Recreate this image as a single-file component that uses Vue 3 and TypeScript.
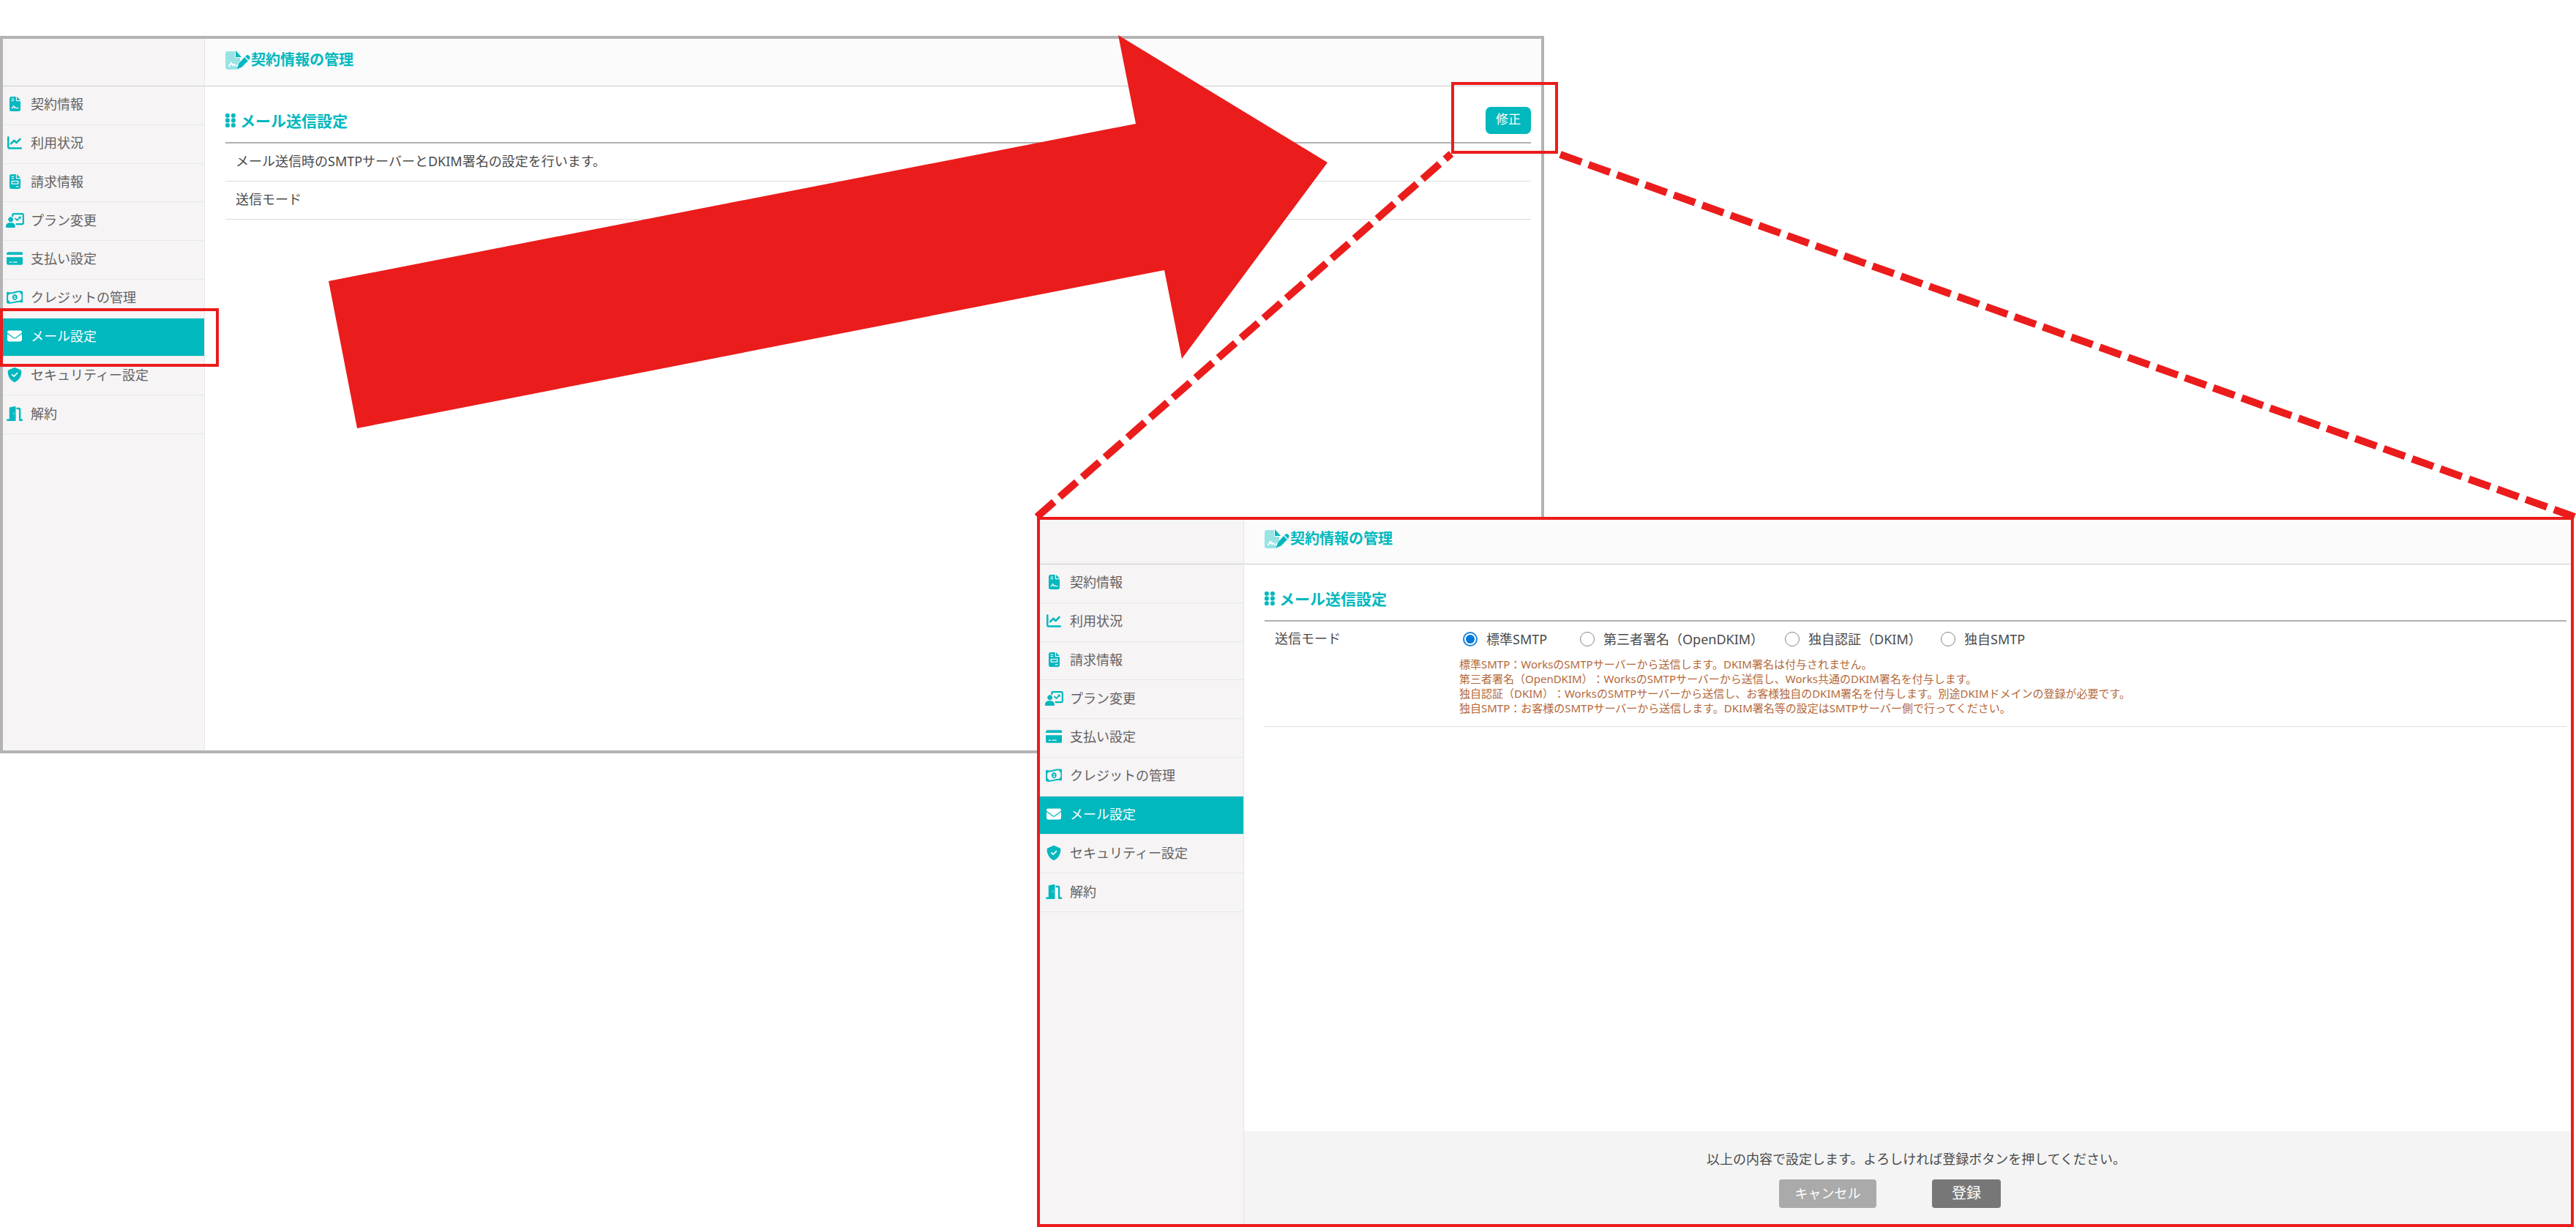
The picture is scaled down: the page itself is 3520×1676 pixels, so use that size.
<script setup lang="ts">
import { ref } from 'vue'

interface Shape {
  d: string
  paint?: 'line' | 'cut'
  width?: number
}
interface NavItem {
  label: string
  box: string
  shapes: Shape[]
}
interface Panel {
  id: 'view' | 'edit'
}

const sheet =
  'M64 0C28.7 0 0 28.7 0 64V448c0 35.3 28.7 64 64 64H320c35.3 0 64-28.7 64-64V160H256c-17.7 0-32-14.3-32-32V0H64zM256 0V128H384L256 0zM80 64h64c8.8 0 16 7.2 16 16s-7.2 16-16 16H80c-8.8 0-16-7.2-16-16s7.2-16 16-16zm0 64h64c8.8 0 16 7.2 16 16s-7.2 16-16 16H80c-8.8 0-16-7.2-16-16s7.2-16 16-16z'

const navItems: NavItem[] = [
  {
    label: '契約情報',
    box: '0 0 384 512',
    shapes: [{ d: sheet }, { d: 'M76 400H100L144 320L178 400L208 368L240 400H308', paint: 'cut', width: 34 }],
  },
  {
    label: '利用状況',
    box: '0 0 512 512',
    shapes: [
      { d: 'M64 64c0-17.7-14.3-32-32-32S0 46.3 0 64V400c0 44.2 35.8 80 80 80H480c17.7 0 32-14.3 32-32s-14.3-32-32-32H80c-8.8 0-16-7.2-16-16V64zm406.6 86.6c12.5-12.5 12.5-32.8 0-45.3s-32.8-12.5-45.3 0L320 210.7l-57.4-57.4c-12.5-12.5-32.8-12.5-45.3 0l-112 112c-12.5 12.5-12.5 32.8 0 45.3s32.8 12.5 45.3 0L240 221.3l57.4 57.4c12.5 12.5 32.8 12.5 45.3 0l128-128z' },
    ],
  },
  {
    label: '請求情報',
    box: '0 0 384 512',
    shapes: [
      { d: sheet },
      { d: 'M84 240H300V336H84Z', paint: 'cut', width: 34 },
      { d: 'M236 432H308', paint: 'cut', width: 34 },
    ],
  },
  {
    label: 'プラン変更',
    box: '0 0 640 512',
    shapes: [
      { d: 'M236 110V70Q236 30 276 30H570Q610 30 610 70V345Q610 385 570 385H370', paint: 'line', width: 56 },
      { d: 'M330 190L395 255L480 170', paint: 'line', width: 46 },
      { d: 'M430 120H530V220Z' },
      { d: 'M170 136a88 88 0 1 0 .1 0ZM130 336H200C270 336 328 394 328 466V480Q328 512 298 512H30Q0 512 0 480V466C0 394 58 336 130 336Z' },
    ],
  },
  {
    label: '支払い設定',
    box: '0 0 576 512',
    shapes: [
      { d: 'M64 32H512Q576 36 576 96V128H0V96Q0 36 64 32ZM0 208H576V416Q576 480 512 480H64Q0 480 0 416Z' },
      { d: 'M108 386H176M236 386H366', paint: 'cut', width: 30 },
    ],
  },
  {
    label: 'クレジットの管理',
    box: '0 0 576 512',
    shapes: [
      { d: 'M28 96C190 170 340 10 548 70V416C380 350 230 500 28 440Z', paint: 'line', width: 52 },
      { d: 'M28 96H112Q100 190 28 190ZM548 60V160Q470 150 460 62ZM28 350Q110 360 116 450H28ZM548 416H464Q476 320 548 320Z' },
      { d: 'M288 152a88 104 0 1 0 .1 0Z' },
      { d: 'M268 216H292V296M262 300H318', paint: 'cut', width: 28 },
    ],
  },
  {
    label: 'メール設定',
    box: '0 0 512 512',
    shapes: [
      { d: 'M48 64C21.5 64 0 85.5 0 112c0 15.1 7.1 29.3 19.2 38.4L236.8 313.6c11.4 8.5 27 8.5 38.4 0L492.8 150.4c12.1-9.1 19.2-23.3 19.2-38.4c0-26.5-21.5-48-48-48H48zM0 176V384c0 35.3 28.7 64 64 64H448c35.3 0 64-28.7 64-64V176L294.4 339.2c-22.8 17.1-54 17.1-76.8 0L0 176z' },
    ],
  },
  {
    label: 'セキュリティー設定',
    box: '0 0 512 512',
    shapes: [
      { d: 'M256 0c4.6 0 9.2 1 13.4 2.9L457.7 82.8c22 9.3 38.4 31 38.3 57.2c-.5 99.2-41.3 280.7-213.6 363.2c-16.7 8-36.1 8-52.8 0C57.3 420.7 16.5 239.2 16 140c-.1-26.2 16.3-47.9 38.3-57.2L242.7 2.9C246.8 1 251.4 0 256 0z' },
      { d: 'M172 252L232 312L344 196', paint: 'cut', width: 46 },
    ],
  },
  {
    label: '解約',
    box: '0 0 576 512',
    shapes: [
      { d: 'M96 64Q96 40 120 34L288 1Q320 -4 320 28V512H32Q0 512 0 480Q0 448 32 448H96Z' },
      { d: 'M370 76H430Q464 76 464 110V480H544', paint: 'line', width: 60 },
      { d: 'M256 222a34 34 0 1 0 .1 0Z', paint: 'cut', width: 8 },
    ],
  },
]

const activeItem = 'メール設定'
const panels: Panel[] = [{ id: 'view' }, { id: 'edit' }]

const modes = ['標準SMTP', '第三者署名（OpenDKIM）', '独自認証（DKIM）', '独自SMTP']
const selectedMode = ref(modes[0])

const notes = [
  '標準SMTP：WorksのSMTPサーバーから送信します。DKIM署名は付与されません。',
  '第三者署名（OpenDKIM）：WorksのSMTPサーバーから送信し、Works共通のDKIM署名を付与します。',
  '独自認証（DKIM）：WorksのSMTPサーバーから送信し、お客様独自のDKIM署名を付与します。別途DKIMドメインの登録が必要です。',
  '独自SMTP：お客様のSMTPサーバーから送信します。DKIM署名等の設定はSMTPサーバー側で行ってください。',
]
</script>

<template>
  <div class="stage">
    <div v-for="panel in panels" :key="panel.id" class="panel" :class="panel.id">
      <aside class="side">
        <div class="side-head"></div>
        <nav class="nav">
          <a
            v-for="item in navItems"
            :key="item.label"
            href="#"
            class="nav-link"
            :class="{ active: item.label === activeItem }"
          >
            <span class="nav-icon">
              <svg class="icon" :viewBox="item.box" aria-hidden="true">
                <path
                  v-for="shape in item.shapes"
                  :key="shape.d"
                  :d="shape.d"
                  :class="shape.paint ?? 'solid'"
                  :stroke-width="shape.width"
                />
              </svg>
            </span>
            <span>{{ item.label }}</span>
          </a>
        </nav>
      </aside>

      <main class="main">
        <header class="bar">
          <svg class="bar-icon" viewBox="0 0 34 26" aria-hidden="true">
            <path class="pale" d="M3 1H13V8Q13 10 15 10H20V15L15 20V22L19 22V23Q19 26 16 26H3Q0 26 0 23V4Q0 1 3 1Z" />
            <path class="sign" d="M4 21H5L8 17L10 20L12 19L14 21" />
            <path class="solid" d="M14 0L22 9H14Z" />
            <path class="solid" d="M26 9L31 14L22 23L16 25L18 18ZM27 8L29 6.500Q30.500 5.500 32 7L33 8Q34.500 9.500 33 11L32 13Z" />
          </svg>
          <h1 class="bar-title">契約情報の管理</h1>
        </header>

        <section class="content">
          <div class="heading">
            <svg class="grip" viewBox="0 0 14 19" aria-hidden="true">
              <rect v-for="n in 6" :key="n" class="solid" :x="n % 2 ? 0 : 8" :y="Math.floor((n - 1) / 2) * 6.6" width="5.800" height="5.800" rx="2" />
            </svg>
            <h2 class="heading-title">メール送信設定</h2>
            <button v-if="panel.id === 'view'" type="button" class="edit-button">修正</button>
          </div>

          <template v-if="panel.id === 'view'">
            <p class="row">メール送信時のSMTPサーバーとDKIM署名の設定を行います。</p>
            <p class="row">送信モード</p>
          </template>

          <div v-else class="form-row" role="radiogroup" aria-labelledby="mode-label">
            <span id="mode-label" class="form-label">送信モード</span>
            <div>
              <div class="modes">
                <label v-for="mode in modes" :key="mode" class="mode">
                  <input v-model="selectedMode" type="radio" name="mode" :value="mode" />
                  <span>{{ mode }}</span>
                </label>
              </div>
              <ul class="notes">
                <li v-for="note in notes" :key="note">{{ note }}</li>
              </ul>
            </div>
          </div>
        </section>

        <footer v-if="panel.id === 'edit'" class="footer">
          <p class="footer-text">以上の内容で設定します。よろしければ登録ボタンを押してください。</p>
          <div class="actions">
            <button type="button" class="cancel">キャンセル</button>
            <button type="button" class="submit">登録</button>
          </div>
        </footer>
      </main>
    </div>

    <svg class="marks" viewBox="0 0 3520 1676" aria-hidden="true">
      <path class="arrow" d="M449 384L1552 169L1528 48L1814 222L1615 490L1591 369L488 585Z" />
      <rect class="frame" x="2" y="423" width="295" height="76" />
      <rect class="frame" x="1985" y="114" width="142" height="94" />
      <path class="dash" d="M1417 706L1983 210" />
      <path class="dash" d="M2132 211L3518 706" />
    </svg>
  </div>
</template>

<style>
body {
  margin: 0;
  background: #fff;
}
</style>

<style scoped>
.stage {
  position: relative;
  display: grid;
  grid-template-columns: minmax(0, 1417fr) minmax(0, 693fr) minmax(0, 1407fr) minmax(0, 3fr);
  grid-template-rows: minmax(0, 49fr) minmax(0, 657fr) minmax(0, 323fr) minmax(0, 647fr);
  aspect-ratio: 3520 / 1676;
  overflow: hidden;
  font-family: "Noto Sans", "Noto Sans CJK JP", sans-serif;
  font-size: 18px;
  line-height: 24px;
  text-spacing-trim: space-all;
  color: #4a4a4a;
}
.panel {
  display: flex;
  box-sizing: border-box;
  background: #fff;
  border: 4px solid #b3b3b3;
}
.view {
  grid-area: 2 / 1 / 4 / 3;
}
.edit {
  grid-area: 3 / 2 / 5 / 4;
  border-color: #eb1c1c;
}

.side {
  flex: none;
  width: 275px;
  background: #f6f4f5;
  border-right: 1px solid #e6e6e6;
}
.edit .side {
  width: 278px;
}
.side-head,
.bar {
  box-sizing: border-box;
  height: 65px;
  border-bottom: 1px solid #ccc;
}
.edit .side-head,
.edit .bar {
  height: 61px;
}
.nav {
  display: grid;
  grid-auto-rows: 1fr;
  height: 475px;
}
.nav-link {
  display: flex;
  align-items: center;
  gap: 6px;
  box-sizing: border-box;
  padding-bottom: 3px;
  border-bottom: 1px solid #e8e8e8;
  color: #626060;
  text-decoration: none;
}
.edit .nav-link {
  padding-left: 3px;
}
.nav-link.active {
  background: #00b8be;
  color: #fff;
}
.nav-icon {
  display: flex;
  justify-content: center;
  width: 32px;
  color: #00b8be;
}
.active .nav-icon {
  color: #fff;
}
.icon {
  height: 20px;
}
.solid {
  fill: currentColor;
  fill-rule: evenodd;
}
.line {
  fill: none;
  stroke: currentColor;
  stroke-linejoin: round;
  stroke-linecap: round;
}
.cut {
  fill: none;
  stroke: #f6f4f5;
  stroke-linejoin: round;
  stroke-linecap: round;
}

.main {
  flex: 1;
  min-width: 0;
  display: flex;
  flex-direction: column;
}
.bar {
  display: flex;
  align-items: flex-end;
  gap: 1px;
  padding: 0 0 22px 28px;
  background: #fbfbfb;
  color: #00b8be;
}
.edit .bar {
  padding-bottom: 21px;
}
.bar-icon {
  width: 34px;
  height: 26px;
}
.pale {
  fill: #99e3e5;
}
.sign {
  fill: none;
  stroke: #fff;
  stroke-width: 2;
}
.bar-title,
.heading-title {
  margin: 0;
  font-size: 20px;
  line-height: 26px;
  font-weight: 700;
}
.content {
  padding: 0 14px 0 28px;
}
.edit .content {
  padding-right: 6px;
}
.heading {
  display: flex;
  align-items: center;
  gap: 6px;
  height: 37px;
  padding: 28px 0 11px;
  border-bottom: 2px solid #b0b0b0;
  color: #00b8be;
}
.heading-title {
  font-size: 21px;
}
.grip {
  width: 14px;
  height: 19px;
}
.edit-button {
  width: 62px;
  height: 37px;
  margin-left: auto;
  padding: 0 0 3px;
  border: 0;
  border-radius: 7px;
  background: #00b8be;
  color: #fff;
  font: inherit;
  font-size: 17px;
}
.row {
  margin: 0;
  padding: 12px 14px 15px;
  border-bottom: 1px solid #ddd;
}
.form-row {
  display: grid;
  grid-template-columns: 252px 1fr;
  padding: 11px 0 15px 14px;
  border-bottom: 1px solid #ddd;
}
.modes {
  display: grid;
  grid-template-columns: 160px 280px 213px auto;
  padding-left: 5px;
}
.mode {
  display: flex;
  align-items: center;
  gap: 12px;
  height: 25px;
  white-space: nowrap;
}
.mode input {
  appearance: none;
  display: grid;
  place-items: center;
  box-sizing: border-box;
  width: 20px;
  height: 20px;
  margin: 0;
  border: 1px solid #858585;
  border-radius: 50%;
  background: #fff;
}
.mode input:checked {
  border: 2px solid #1a84da;
}
.mode input:checked::before {
  content: "";
  width: 12px;
  height: 12px;
  border-radius: 50%;
  background: #0078d7;
}
.notes {
  margin: 12px 0 0;
  padding: 0;
  list-style: none;
  font-size: 15px;
  line-height: 20px;
  color: #b4683a;
}
.footer {
  display: flex;
  flex-direction: column;
  align-items: center;
  gap: 14px;
  margin-top: auto;
  padding: 24px 0 22px 24px;
  background: #f4f4f4;
}
.footer-text {
  margin: 0;
  line-height: 28px;
}
.actions {
  display: flex;
  gap: 76px;
  padding-right: 72px;
}
.cancel,
.submit {
  width: 133px;
  height: 39px;
  padding: 0 0 2px;
  border: 0;
  border-radius: 4px;
  background: #aaa;
  color: #fff;
  font: inherit;
}
.submit {
  width: 94px;
  background: #777;
  font-size: 20px;
}

.marks {
  position: absolute;
  inset: 0;
  width: 100%;
  height: 100%;
  pointer-events: none;
}
.arrow {
  fill: #eb1c1c;
}
.frame {
  fill: none;
  stroke: #eb1c1c;
  stroke-width: 4;
}
.dash {
  fill: none;
  stroke: #eb1c1c;
  stroke-width: 10;
  stroke-dasharray: 30.9 10.3;
}
</style>
